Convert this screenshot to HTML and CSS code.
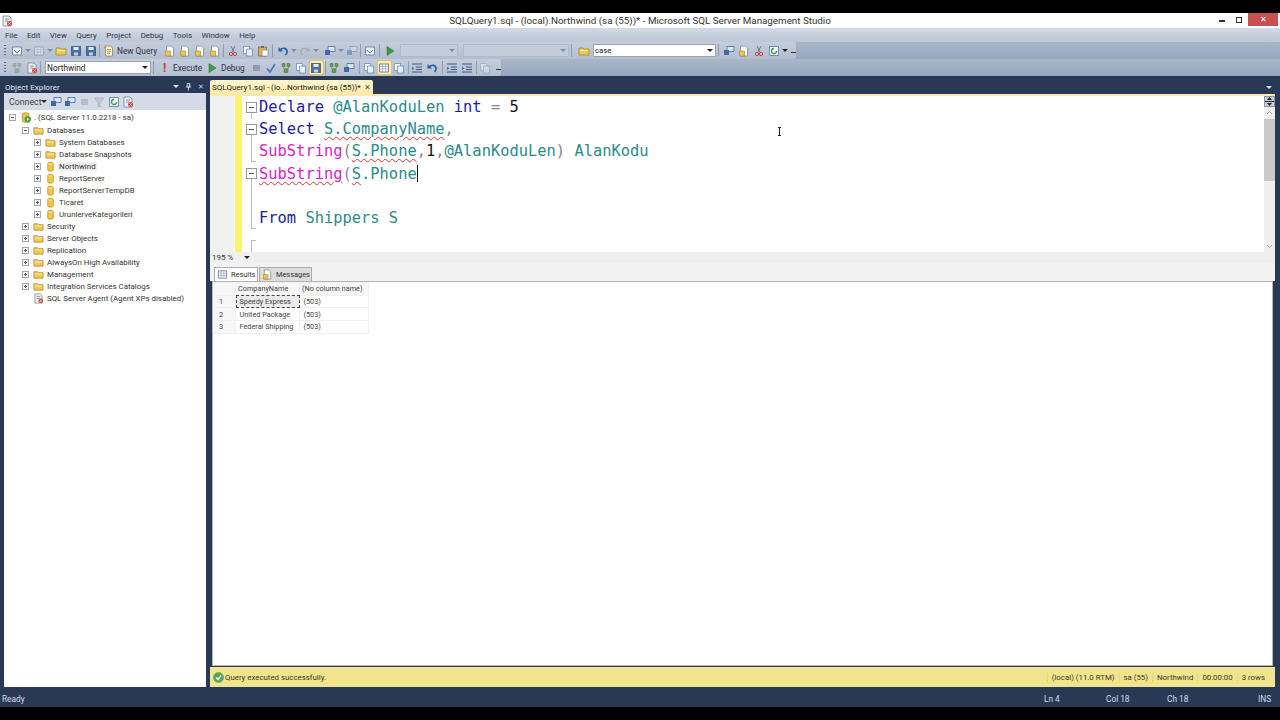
FILE: index.html
```html
<!DOCTYPE html>
<html lang="en">
<head>
    <meta charset="UTF-8">
    <title>SQLQuery1.sql - (local).Northwind (sa (55))* - Microsoft SQL Server Management Studio</title>
    <link rel="stylesheet" href="styles.css">
</head>
<body>
    <!-- Shared toolbar and tree icons -->
    <svg class="sprites" width="0" height="0">
        <symbol id="i-folder" viewBox="0 0 12 12"><path d="M1 3h4l1 1h5v6H1z" fill="#f2c94f" stroke="#a8842c" stroke-width=".8"/><path d="M2 5h8v1H2z" fill="#fff3b8"/></symbol>
        <symbol id="i-db" viewBox="0 0 12 12"><path d="M3 2.500C3 1 9 1 9 2.500V10C9 11.400 3 11.400 3 10z" fill="#f4c542" stroke="#b98d22" stroke-width=".8"/><path d="M3.600 3c1 .8 3.800.8 4.800 0" fill="none" stroke="#fff0a8" stroke-width=".8"/></symbol>
        <symbol id="i-server" viewBox="0 0 12 12"><path d="M2 2c0-1.500 7-1.500 7 0v8c0 1.500-7 1.500-7 0z" fill="#e9c24c" stroke="#a8842c" stroke-width=".7"/><circle cx="8" cy="8" r="3.400" fill="#3f9b3f"/><path d="M7 6.300 9.600 8 7 9.700z" fill="#fff"/></symbol>
        <symbol id="i-agent" viewBox="0 0 12 12"><path d="M2 1h6l2 2v8H2z" fill="#eef0f4" stroke="#77808e" stroke-width=".8"/><path d="M4 4h4M4 6h3" stroke="#77808e" stroke-width=".8"/><circle cx="8.500" cy="8.500" r="2.500" fill="#d8433a"/><path d="M7.400 7.400l2.200 2.200M9.600 7.400l-2.200 2.200" stroke="#fff" stroke-width=".7"/></symbol>
        <symbol id="i-save" viewBox="0 0 12 12"><path d="M1.500 1.500h9v9h-9z" fill="#4a6fa8" stroke="#2c4a78" stroke-width=".7"/><path d="M3.500 2h5v3h-5z" fill="#e8eef8"/><path d="M4 7.500h4v3H4z" fill="#c5d0e2"/></symbol>
        <symbol id="i-doc" viewBox="0 0 12 12"><path d="M2.500 1h5l2 2v8h-7z" fill="#fff" stroke="#7c8797" stroke-width=".8"/><path d="M1.500 6h5v5h-5z" fill="#eec454" stroke="#a8842c" stroke-width=".6"/></symbol>
        <symbol id="i-query" viewBox="0 0 12 12"><path d="M2.500 1h5l2 2v8h-7z" fill="#fff9d8" stroke="#8c8455" stroke-width=".8"/><path d="M4 4.500h4M4 6.500h4M4 8.500h3" stroke="#9a7a2a" stroke-width=".8"/><path d="M1 3 3 1" stroke="#d69a1c" stroke-width="1.400"/></symbol>
        <symbol id="i-cut" viewBox="0 0 12 12"><path d="M4 1l3 6M8 1 5 7" stroke="#66768c" stroke-width="1"/><circle cx="4" cy="9" r="1.700" fill="none" stroke="#c44" stroke-width="1"/><circle cx="8" cy="9" r="1.700" fill="none" stroke="#c44" stroke-width="1"/></symbol>
        <symbol id="i-copy" viewBox="0 0 12 12"><path d="M1.500 1.500h6v7h-6z" fill="#fff" stroke="#6d8db3" stroke-width=".8"/><path d="M4.500 4h6v7h-6z" fill="#e6eef8" stroke="#6d8db3" stroke-width=".8"/></symbol>
        <symbol id="i-paste" viewBox="0 0 12 12"><path d="M1.500 2h8v9h-8z" fill="#d9b25a" stroke="#8a6a26" stroke-width=".8"/><path d="M4 1h3v2H4z" fill="#666"/><path d="M5 5h6v6H5z" fill="#fff" stroke="#7c8797" stroke-width=".7"/></symbol>
        <symbol id="i-undo" viewBox="0 0 12 12"><path d="M3 5c3-3 7-2 7 2 0 1-.5 2-1.500 3" fill="none" stroke="#2f5f9e" stroke-width="1.700"/><path d="M1.500 2v4.500H6z" fill="#2f5f9e"/></symbol>
        <symbol id="i-redo" viewBox="0 0 12 12"><path d="M9 5C6 2 2 3 2 7c0 1 .5 2 1.500 3" fill="none" stroke="#a4b0c0" stroke-width="1.500"/><path d="M10.500 2v4.500H6z" fill="#a4b0c0"/></symbol>
        <symbol id="i-nav" viewBox="0 0 12 12"><path d="M4 1.500h7v5H4z" fill="#dce6f3" stroke="#3f6aa5" stroke-width=".8"/><path d="M1 5h5v5H1z" fill="#3f6aa5"/></symbol>
        <symbol id="i-win" viewBox="0 0 12 12"><path d="M1.500 2h9v8h-9z" fill="#e4ebf5" stroke="#5f7897" stroke-width=".8"/><path d="M3 5l3 3 3-3" fill="none" stroke="#5a9a4a" stroke-width="1"/></symbol>
        <symbol id="i-play" viewBox="0 0 12 12"><path d="M3 1.500 10 6l-7 4.500z" fill="#3f9b3f" stroke="#2a702a" stroke-width=".5"/></symbol>
        <symbol id="i-grid" viewBox="0 0 12 12"><path d="M1.500 2h9v8h-9z" fill="#fff" stroke="#5f7897" stroke-width=".9"/><path d="M1.500 4.500h9M1.500 7h9M4.500 2v8M7.500 2v8" stroke="#8fa3bd" stroke-width=".7"/></symbol>
        <symbol id="i-tree" viewBox="0 0 12 12"><path d="M2 1.500h3v3H2zM7 1.500h3v3H7zM4 7.500h4v3H4z" fill="#6d9a42" stroke="#4d7230" stroke-width=".5"/><path d="M3.500 4.500v2h5v-2" fill="none" stroke="#5a7fa8" stroke-width=".7"/></symbol>
        <symbol id="i-filter" viewBox="0 0 12 12"><path d="M1.500 2h9L7 6.500V11L5 10V6.500z" fill="#c3cad4" stroke="#98a2b0" stroke-width=".6"/></symbol>
        <symbol id="i-refresh" viewBox="0 0 12 12"><path d="M1.500 1.500h9v9h-9z" fill="#eef3fa" stroke="#4f79ad" stroke-width=".8"/><path d="M8.500 6A2.500 2.500 0 1 1 6 3.500" fill="none" stroke="#3f9b3f" stroke-width="1.300"/></symbol>
        <symbol id="i-indent" viewBox="0 0 12 12"><path d="M1 2h10M5 5h6M5 7.500h6M1 10h10" stroke="#44597a" stroke-width="1"/><path d="M1 4.500 3.500 6.300 1 8z" fill="#2f7fbf"/></symbol>
        <symbol id="i-check" viewBox="0 0 12 12"><path d="M2 6.500 5 10l5-8" fill="none" stroke="#3c75b5" stroke-width="1.500"/></symbol>
    </svg>

    <div class="app">
        <!-- Window title -->
        <header class="titlebar">
            <div class="title-left"><svg class="ic"><use href="#i-agent"/></svg></div>
            <div class="title-text">SQLQuery1.sql - (local).Northwind (sa (55))* - Microsoft SQL Server Management Studio</div>
            <div class="winbtns">
                <span class="win-min"></span>
                <span class="win-restore"></span>
                <span class="win-close">&#x2715;</span>
            </div>
        </header>

        <nav class="menubar">
            <span>File</span><span>Edit</span><span>View</span><span>Query</span><span>Project</span><span>Debug</span><span>Tools</span><span>Window</span><span>Help</span>
        </nav>

        <!-- Standard toolbar -->
        <div class="toolrow">
            <div class="toolbar tb-top">
                <i class="grip"></i>
                <span class="tool"><svg class="ic"><use href="#i-win"/></svg></span><i class="drop"></i>
                <span class="tool off"><svg class="ic"><use href="#i-grid"/></svg></span><i class="drop"></i>
                <span class="tool"><svg class="ic"><use href="#i-folder"/></svg></span>
                <span class="tool"><svg class="ic"><use href="#i-save"/></svg></span>
                <span class="tool"><svg class="ic"><use href="#i-save"/></svg></span>
                <i class="sep"></i>
                <span class="tool"><svg class="ic"><use href="#i-query"/></svg></span><span class="tool-label tl-new">New Query</span>
                <span class="tool"><svg class="ic"><use href="#i-doc"/></svg></span>
                <span class="tool"><svg class="ic"><use href="#i-doc"/></svg></span>
                <span class="tool"><svg class="ic"><use href="#i-doc"/></svg></span>
                <span class="tool"><svg class="ic"><use href="#i-doc"/></svg></span>
                <i class="sep"></i>
                <span class="tool"><svg class="ic"><use href="#i-cut"/></svg></span>
                <span class="tool"><svg class="ic"><use href="#i-copy"/></svg></span>
                <span class="tool"><svg class="ic"><use href="#i-paste"/></svg></span>
                <i class="sep wide"></i>
                <span class="tool"><svg class="ic"><use href="#i-undo"/></svg></span><i class="drop"></i>
                <span class="tool"><svg class="ic"><use href="#i-redo"/></svg></span><i class="drop"></i>
                <span class="tool nudge"><svg class="ic"><use href="#i-nav"/></svg></span><i class="drop"></i>
                <span class="tool off"><svg class="ic"><use href="#i-nav"/></svg></span>
                <i class="sep"></i>
                <span class="tool"><svg class="ic"><use href="#i-win"/></svg></span>
                <i class="sep wide"></i>
                <span class="tool"><svg class="ic"><use href="#i-play"/></svg></span>
                <div class="combo combo-off c1"><i class="drop"></i></div>
                <div class="combo combo-off c2"><i class="drop"></i></div>
                <i class="sep wide"></i>
                <span class="tool find"><svg class="ic"><use href="#i-folder"/></svg></span>
                <div class="combo c3"><span>case</span><i class="drop dark"></i></div>
                <i class="sep wide"></i>
                <span class="tool"><svg class="ic"><use href="#i-nav"/></svg></span>
                <span class="tool"><svg class="ic"><use href="#i-doc"/></svg></span>
                <span class="tool"><svg class="ic"><use href="#i-cut"/></svg></span>
                <span class="tool"><svg class="ic"><use href="#i-refresh"/></svg></span><i class="drop dark"></i>
                <i class="more"></i>
            </div>
        </div>

        <!-- SQL editor toolbar -->
        <div class="toolrow">
            <div class="toolbar tb-sql">
                <i class="grip"></i>
                <span class="tool off"><svg class="ic"><use href="#i-tree"/></svg></span>
                <span class="tool"><svg class="ic"><use href="#i-agent"/></svg></span>
                <i class="sep"></i>
                <div class="combo c4"><span>Northwind</span><i class="drop dark"></i></div>
                <i class="sep wide"></i>
                <span class="bang">!</span><span class="tool-label tl-exec">Execute</span>
                <span class="tool"><svg class="ic"><use href="#i-play"/></svg></span><span class="tool-label tl-debug">Debug</span>
                <span class="stop"></span>
                <span class="tool"><svg class="ic"><use href="#i-check"/></svg></span>
                <span class="tool"><svg class="ic"><use href="#i-tree"/></svg></span>
                <span class="tool"><svg class="ic"><use href="#i-copy"/></svg></span>
                <span class="tool on"><svg class="ic"><use href="#i-save"/></svg></span>
                <i class="sep"></i>
                <span class="tool"><svg class="ic"><use href="#i-tree"/></svg></span>
                <span class="tool"><svg class="ic"><use href="#i-nav"/></svg></span>
                <i class="sep wide"></i>
                <span class="tool"><svg class="ic"><use href="#i-copy"/></svg></span>
                <span class="tool on"><svg class="ic"><use href="#i-grid"/></svg></span>
                <span class="tool"><svg class="ic"><use href="#i-copy"/></svg></span>
                <i class="sep"></i>
                <span class="tool"><svg class="ic"><use href="#i-indent"/></svg></span>
                <span class="tool"><svg class="ic"><use href="#i-undo"/></svg></span>
                <i class="sep wide"></i>
                <span class="tool"><svg class="ic"><use href="#i-indent"/></svg></span>
                <span class="tool"><svg class="ic"><use href="#i-indent"/></svg></span>
                <i class="sep"></i>
                <span class="tool off"><svg class="ic"><use href="#i-copy"/></svg></span>
                <i class="more"></i>
            </div>
        </div>

        <main class="workspace">
            <!-- Object Explorer -->
            <aside class="explorer">
                <div class="panel-head">
                    <span>Object Explorer</span>
                    <span class="panel-btns">
                        <i class="drop light"></i>
                        <svg class="pin" viewBox="0 0 8 9"><path d="M2.500.5h3v4h-3zM1 4.500h6M4 4.500V8.500M5 1v3" fill="none" stroke="#d3dbe7" stroke-width="1"/></svg>
                        <b>&#x2715;</b>
                    </span>
                </div>
                <div class="explorer-tools">
                    <span class="connect">Connect</span><i class="drop dark"></i>
                    <span class="tool"><svg class="ic"><use href="#i-nav"/></svg></span>
                    <span class="tool"><svg class="ic"><use href="#i-nav"/></svg></span>
                    <span class="tool off stopbox"><span class="stop"></span></span>
                    <span class="tool"><svg class="ic"><use href="#i-filter"/></svg></span>
                    <span class="tool"><svg class="ic"><use href="#i-refresh"/></svg></span>
                    <span class="tool"><svg class="ic"><use href="#i-agent"/></svg></span>
                </div>
                <ul class="tree">
                    <li class="l0"><i class="node minus"></i><svg class="ic"><use href="#i-server"/></svg><span>. (SQL Server 11.0.2218 - sa)</span></li>
                    <li class="l1"><i class="node minus"></i><svg class="ic"><use href="#i-folder"/></svg><span>Databases</span></li>
                    <li class="l2"><i class="node"></i><svg class="ic"><use href="#i-folder"/></svg><span>System Databases</span></li>
                    <li class="l2"><i class="node"></i><svg class="ic"><use href="#i-folder"/></svg><span>Database Snapshots</span></li>
                    <li class="l2"><i class="node"></i><svg class="ic"><use href="#i-db"/></svg><span class="selected">Northwind</span></li>
                    <li class="l2"><i class="node"></i><svg class="ic"><use href="#i-db"/></svg><span>ReportServer</span></li>
                    <li class="l2"><i class="node"></i><svg class="ic"><use href="#i-db"/></svg><span>ReportServerTempDB</span></li>
                    <li class="l2"><i class="node"></i><svg class="ic"><use href="#i-db"/></svg><span>Ticaret</span></li>
                    <li class="l2"><i class="node"></i><svg class="ic"><use href="#i-db"/></svg><span>UrunlerveKategorileri</span></li>
                    <li class="l1"><i class="node"></i><svg class="ic"><use href="#i-folder"/></svg><span>Security</span></li>
                    <li class="l1"><i class="node"></i><svg class="ic"><use href="#i-folder"/></svg><span>Server Objects</span></li>
                    <li class="l1"><i class="node"></i><svg class="ic"><use href="#i-folder"/></svg><span>Replication</span></li>
                    <li class="l1"><i class="node"></i><svg class="ic"><use href="#i-folder"/></svg><span>AlwaysOn High Availability</span></li>
                    <li class="l1"><i class="node"></i><svg class="ic"><use href="#i-folder"/></svg><span>Management</span></li>
                    <li class="l1"><i class="node"></i><svg class="ic"><use href="#i-folder"/></svg><span>Integration Services Catalogs</span></li>
                    <li class="l1"><i class="node none"></i><svg class="ic"><use href="#i-agent"/></svg><span>SQL Server Agent (Agent XPs disabled)</span></li>
                </ul>
            </aside>

            <section class="document">
                <div class="tabs">
                    <div class="tab"><span>SQLQuery1.sql - (lo...Northwind (sa (55))*</span><b>&#x2715;</b></div>
                    <i class="drop light tabs-drop"></i>
                </div>

                <!-- Query editor -->
                <div class="editor">
                    <div class="gutter"></div>
                    <div class="changes"></div>
                    <div class="folds">
                        <i class="fold f1"></i>
                        <i class="fold f2"></i>
                        <i class="fold f3"></i>
                        <i class="foldline fl1"></i>
                        <i class="foldline fl2"></i>
                        <i class="foldline fl3"></i>
                        <i class="foldline fl4"></i>
                    </div>
                    <pre class="code"><span class="kw">Declare</span> <span class="id">@AlanKoduLen</span> <span class="kw">int</span> <span class="op">=</span> 5
<span class="kw">Select</span> <span class="id err">S.CompanyName</span><span class="op">,</span>
<span class="fn">SubString</span><span class="op">(</span><span class="id err">S.Phone</span><span class="op">,</span>1<span class="op">,</span><span class="id">@AlanKoduLen</span><span class="op">)</span> <span class="id">AlanKodu</span>
<span class="fn err">SubString</span><span class="op">(</span><span class="id err">S</span><span class="id">.Phone</span><span class="caret"></span>

<span class="kw">From</span> <span class="id">Shippers S</span></pre>
                    <div class="ibeam"></div>
                    <div class="vscroll">
                        <svg class="split" viewBox="0 0 11 11"><path d="M1 5.500h9" stroke="#222" stroke-width="1"/><path d="M3 4 5.500 1 8 4zM3 7l2.500 3L8 7z" fill="#222"/></svg>
                        <svg class="chev" viewBox="0 0 11 11"><path d="M3 6.500l2.500-2.500L8 6.500" fill="none" stroke="#aaa" stroke-width="1"/></svg>
                        <i class="thumb"></i>
                        <svg class="chev down" viewBox="0 0 11 11"><path d="M3 4.500 5.500 7 8 4.500" fill="none" stroke="#aaa" stroke-width="1"/></svg>
                    </div>
                </div>

                <div class="zoombar">
                    <span class="zoomval">195 %</span><i class="drop dark"></i>
                    <div class="hscroll"></div>
                </div>

                <!-- Results pane -->
                <div class="result-tabs">
                    <div class="rtab active"><svg class="ic"><use href="#i-grid"/></svg>Results</div>
                    <div class="rtab"><svg class="ic"><use href="#i-doc"/></svg>Messages</div>
                </div>
                <div class="results">
                    <table class="grid">
                        <tr><th></th><th>CompanyName</th><th>(No column name)</th></tr>
                        <tr><th>1</th><td class="current">Speedy Express</td><td>(503)</td></tr>
                        <tr><th>2</th><td>United Package</td><td>(503)</td></tr>
                        <tr><th>3</th><td>Federal Shipping</td><td>(503)</td></tr>
                    </table>
                </div>
                <div class="querystatus">
                    <svg class="okicon" viewBox="0 0 11 11"><circle cx="5.500" cy="5.500" r="5" fill="#4fa853" stroke="#7d9d7d" stroke-width=".8"/><path d="M3 5.500 5 7.500 8 3.500" fill="none" stroke="#fff" stroke-width="1.300"/></svg>
                    <span class="qs-msg">Query executed successfully.</span>
                    <span class="qs-cell">(local) (11.0 RTM)</span>
                    <span class="qs-cell">sa (55)</span>
                    <span class="qs-cell">Northwind</span>
                    <span class="qs-cell">00:00:00</span>
                    <span class="qs-cell">3 rows</span>
                </div>
            </section>
        </main>

        <footer class="statusbar">
            <span>Ready</span>
            <span>Ln 4</span>
            <span>Col 18</span>
            <span>Ch 18</span>
            <span>INS</span>
        </footer>
    </div>
</body>
</html>
```
FILE: styles.css
```css
/* Basic page styles */
* {
    box-sizing: border-box;
}

html, body {
    margin: 0;
    height: 100%;
}

body {
    background: #000;
    font-family: Roboto, "Open Sans", sans-serif;
    font-size: 8.5px;
    color: #222;
    padding: 13px 0;
    overflow: hidden;
}

.sprites {
    position: absolute;
}

.app {
    height: 694px;
    display: flex;
    flex-direction: column;
    background: #293955;
}

.ic {
    width: 12px;
    height: 12px;
    flex: none;
}

/* Title bar */
.titlebar {
    height: 15px;
    flex: none;
    background: #fff;
    display: grid;
    grid-template-columns: 1fr auto 1fr;
    align-items: center;
}

.title-left {
    padding-left: 1px;
    display: flex;
}

.title-text {
    font-size: 9.8px;
    color: #333;
}

.winbtns {
    display: flex;
    justify-content: flex-end;
    align-items: flex-start;
    height: 15px;
}

.win-min {
    width: 6px;
    height: 2px;
    background: #333;
    margin: 7px 11px 0 0;
}

.win-restore {
    width: 6px;
    height: 6px;
    border: 1px solid #333;
    margin: 4px 6px 0 0;
}

.win-close {
    width: 30px;
    height: 13px;
    margin-right: 2px;
    background: #c75050;
    color: #fff;
    font-size: 8px;
    line-height: 13px;
    text-align: center;
}

/* Menu */
.menubar {
    height: 14px;
    flex: none;
    display: flex;
    align-items: center;
    gap: 9.5px;
    padding-left: 5px;
    background: linear-gradient(#d3dae6, #bcc6d6);
    color: #2c3440;
    font-size: 7.9px;
}

/* Toolbars */
.toolrow {
    height: 17px;
    flex: none;
    background: linear-gradient(#a9b6c9, #97a6bd);
}

.toolbar {
    height: 17px;
    display: flex;
    align-items: center;
    padding-left: 4px;
    background: linear-gradient(#c4cddc, #b3bed0);
    border-radius: 0 2px 2px 0;
}

.tb-top {
    width: 796px;
}

.tb-sql {
    width: 501px;
}

.tool {
    width: 15px;
    height: 15px;
    flex: none;
    display: flex;
    align-items: center;
    justify-content: center;
}

.tool.off {
    opacity: .45;
}

.tool.on {
    background: #fdeeb8;
    border: 1px solid #e5c365;
}

.tool.nudge {
    margin-left: 3px;
}

.tool.find {
    margin-left: 2px;
}

.tool-label {
    color: #2c3440;
    font-size: 8.3px;
    white-space: nowrap;
}

.tl-new {
    width: 46px;
    padding-left: 1px;
}

.tl-exec {
    width: 34.5px;
    padding-left: 3px;
}

.tl-debug {
    width: 29px;
    padding-left: 1.5px;
}

.bang {
    width: 11px;
    margin-left: 3px;
    color: #c8402c;
    font-weight: bold;
    font-size: 12px;
    text-align: center;
    line-height: 14px;
}

.stop {
    display: block;
    width: 7px;
    height: 6px;
    background: #8f9bae;
    margin: 0 4px;
    flex: none;
}

.grip {
    width: 2px;
    height: 11px;
    flex: none;
    margin-right: 3px;
    background: repeating-linear-gradient(#5e6d85 0 1px, transparent 1px 3px);
}

.sep {
    width: 1px;
    height: 13px;
    flex: none;
    margin: 0 1px;
    background: #8f9db3;
}

.sep.wide {
    margin: 0 2px;
}

.drop {
    width: 0;
    height: 0;
    flex: none;
    margin: 0 0 0 1px;
    border-left: 3px solid transparent;
    border-right: 3px solid transparent;
    border-top: 3px solid #7e8ba0;
}

.drop.dark {
    border-top-color: #222;
}

.drop.light {
    border-top-color: #dbe3ee;
}

.more {
    width: 5px;
    height: 5px;
    flex: none;
    margin-left: 3px;
    border-bottom: 1px solid #333;
    border-top: 1px solid transparent;
}

.combo {
    height: 13px;
    flex: none;
    display: flex;
    align-items: center;
    justify-content: space-between;
    padding: 0 2px 0 1px;
    background: #fff;
    border: 1px solid #9aa6b8;
    font-size: 7.8px;
    color: #222;
}

.combo-off {
    justify-content: flex-end;
    background: #c3ccda;
    border-color: #aeb9ca;
}

.c1 {
    width: 58px;
    margin-left: 3px;
}

.c2 {
    width: 106px;
    margin-left: 5px;
}

.c3 {
    width: 123px;
    margin-left: 2px;
}

.c4 {
    width: 106px;
    margin-left: 3px;
    font-size: 8.3px;
}

/* Main area */
.workspace {
    flex: 1;
    min-height: 0;
    display: flex;
    padding: 4px 5px 0 4px;
    gap: 4px;
}

.explorer {
    width: 202px;
    flex: none;
    display: flex;
    flex-direction: column;
}

.panel-head {
    height: 13px;
    flex: none;
    display: flex;
    align-items: center;
    justify-content: space-between;
    padding-left: 1px;
    color: #dfe6f0;
    font-size: 8.1px;
}

.panel-btns {
    display: flex;
    align-items: center;
    gap: 6px;
    color: #c9d3e2;
    font-size: 7px;
    padding-right: 2px;
}

.panel-btns b {
    font-weight: normal;
}

.pin {
    width: 7px;
    height: 8px;
}

.explorer-tools {
    height: 17px;
    flex: none;
    display: flex;
    align-items: center;
    background: #d4dbe6;
    padding-left: 5px;
    font-size: 8.8px;
    color: #444;
}

.connect {
    width: 31px;
    flex: none;
}

.explorer-tools .drop {
    margin-right: 1.5px;
}

.explorer-tools .tool {
    width: 14.5px;
}

.stopbox .stop {
    margin: 0;
}

.tree {
    flex: 1;
    margin: 0;
    padding: 0;
    list-style: none;
    background: #fff;
    color: #333;
}

.tree li {
    height: 12px;
    display: flex;
    align-items: center;
    gap: 2px;
    white-space: nowrap;
    font-size: 7.9px;
}

.tree .l0 {
    padding-left: 5px;
    height: 14px;
}

.tree .l1 {
    padding-left: 18px;
}

.tree .l2 {
    padding-left: 30px;
}

.tree .ic {
    width: 11px;
    height: 11px;
    margin-right: 1px;
}

.tree .l0 .ic {
    width: 12px;
    margin: 0;
}

.selected {
    background: #efefef;
    padding: 0 1px;
    margin-left: -1px;
}

.node {
    width: 7px;
    height: 7px;
    flex: none;
    margin-right: 2px;
    border: 1px solid #a5a5a5;
    background:
        linear-gradient(#555, #555) center / 3px 1px no-repeat,
        linear-gradient(#555, #555) center / 1px 3px no-repeat,
        #f4f4f4;
}

.node.minus {
    background:
        linear-gradient(#555, #555) center / 3px 1px no-repeat,
        #fff;
}

.node.none {
    border: 0;
    background: none;
}

/* Document well */
.document {
    flex: 1;
    min-width: 0;
    display: flex;
    flex-direction: column;
}

.tabs {
    height: 16px;
    flex: none;
    display: flex;
    justify-content: space-between;
    align-items: flex-start;
    border-bottom: 2px solid #fde9a9;
}

.tab {
    height: 14px;
    width: 163px;
    padding: 0 2px 0 2px;
    display: flex;
    align-items: center;
    justify-content: space-between;
    background: linear-gradient(#fff7cf, #fde9a9);
    border-radius: 2px 2px 0 0;
    font-size: 8.1px;
    white-space: nowrap;
}

.tab b {
    font-weight: normal;
    font-size: 8px;
    color: #555;
}

.tabs-drop {
    margin: 6px 3px 0 0;
}

.editor {
    height: 156px;
    flex: none;
    position: relative;
    display: flex;
    background: #fff;
}

.gutter {
    width: 24px;
    background: #f0f0f0;
}

.changes {
    width: 7px;
    margin-left: 1px;
    background: #fdf170;
}

.folds {
    width: 17px;
    position: relative;
}

.fold {
    position: absolute;
    left: 4px;
    width: 11px;
    height: 11px;
    border: 1px solid #999;
    background: linear-gradient(#555, #555) center / 5px 1px no-repeat, #fff;
}

.f1 { top: 6px; }
.f2 { top: 28px; }
.f3 { top: 72px; }

/* Fold guide segments between the boxes */
.foldline {
    position: absolute;
    left: 9px;
    width: 5px;
    border-left: 1px solid #bbb;
}

.fl1 { top: 17px; height: 6px; }
.fl2 { top: 39px; height: 27px; border-bottom: 1px solid #bbb; }
.fl3 { top: 83px; height: 50px; border-bottom: 1px solid #bbb; }
.fl4 { top: 144px; height: 12px; border-top: 1px solid #bbb; }

.code {
    flex: 1;
    margin: 0;
    padding: 0;
    font-family: "DejaVu Sans Mono", "Liberation Mono", monospace;
    font-size: 15.42px;
    line-height: 22.2px;
    color: #111;
}

.kw { color: #1c1c9c; }
.id { color: #2d8a8a; }
.fn { color: #d61fc4; }
.op { color: #888; }

.err {
    text-decoration: underline wavy #d9352c 1px;
    text-underline-offset: 2px;
}

.caret {
    display: inline-block;
    width: 1px;
    height: 17px;
    background: #111;
    vertical-align: -3px;
}

.ibeam {
    position: absolute;
    left: 568px;
    top: 31px;
    width: 3px;
    height: 9px;
    border-top: 1px solid #222;
    border-bottom: 1px solid #222;
    background: linear-gradient(#222, #222) center / 1px 100% no-repeat;
}

.vscroll {
    width: 11px;
    flex: none;
    display: flex;
    flex-direction: column;
    background: #efefef;
}

.split {
    width: 11px;
    height: 11px;
    flex: none;
    background: #c8cfdb;
    outline: 1px solid #8a95a8;
    outline-offset: -1px;
}

.chev {
    width: 11px;
    height: 12px;
    flex: none;
}

.chev.down {
    margin-top: auto;
}

.thumb {
    height: 62px;
    flex: none;
    background: #c9c9c9;
}

.zoombar {
    height: 11px;
    flex: none;
    display: flex;
    align-items: center;
    padding-left: 2px;
    background: #f0f0f0;
    font-size: 8px;
    color: #333;
}

.zoomval {
    width: 31px;
}

.hscroll {
    flex: 1;
    height: 11px;
    margin-left: 3px;
    background: #efefef;
}

.result-tabs {
    height: 18px;
    flex: none;
    display: flex;
    align-items: flex-end;
    gap: 1px;
    padding: 4px 0 0 4px;
    background: #f2f2f2;
}

.rtab {
    height: 14px;
    display: flex;
    align-items: center;
    gap: 3px;
    padding: 0 2px;
    background: #dcdcdc;
    border: 1px solid #aaa;
    border-bottom: 0;
    font-size: 7.4px;
    color: #333;
    width: 53px;
}

.rtab .ic {
    width: 11px;
    height: 11px;
}

.rtab.active {
    width: 44px;
    height: 14px;
    background: #fff;
}

.results {
    flex: 1;
    min-height: 0;
    margin: 0 2px;
    background: #fff;
    border: 1px solid #b5b5b5;
    padding: 0 0 0 1px;
}

.grid {
    border-collapse: collapse;
    table-layout: fixed;
    width: 155px;
    font-size: 7.3px;
    color: #444;
}

.grid tr {
    height: 12.7px;
}

.grid th, .grid td {
    padding: 0 0 0 3.5px;
    font-weight: normal;
    text-align: left;
    white-space: nowrap;
    overflow: hidden;
    border: 1px solid #f0f0f0;
}

.grid tr:first-child th {
    padding-left: 2px;
    background: #f7f7f7;
}

.grid th:first-child {
    width: 21px;
    padding-left: 4px;
    background: #f7f7f7;
}

.grid th:nth-child(2) {
    width: 64px;
}

.grid .current {
    background: #eaeaea;
    outline: 1px dashed #444;
    outline-offset: -1px;
}

.querystatus {
    height: 20px;
    flex: none;
    display: flex;
    align-items: center;
    margin-top: 1px;
    padding: 0 6px 0 3px;
    background: #f0e58d;
    font-size: 7.85px;
    color: #3b3a25;
}

.okicon {
    width: 11px;
    height: 11px;
    flex: none;
    margin-right: 1px;
}

.qs-msg {
    margin-right: auto;
}

.qs-cell {
    padding: 0 4px;
    border-left: 1px solid #e4d67c;
    white-space: nowrap;
}

/* Bottom status bar */
.statusbar {
    height: 20px;
    flex: none;
    display: grid;
    grid-template-columns: 1042px 62px 61px 91px 1fr;
    align-items: center;
    padding: 3px 0 0 2px;
    color: #d5dde8;
    font-size: 8.3px;
}
```
